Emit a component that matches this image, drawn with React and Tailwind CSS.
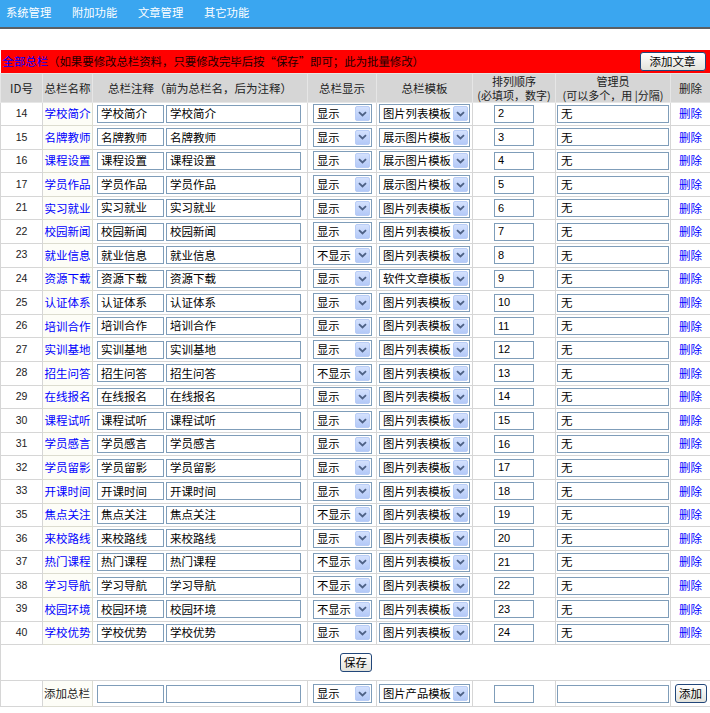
const cn = '"Noto Sans CJK SC", "Noto Sans", sans-serif';

const rows = [
  [14, "学校简介", "显示", "图片列表模板", 2],
  [15, "名牌教师", "显示", "展示图片模板", 3],
  [16, "课程设置", "显示", "展示图片模板", 4],
  [17, "学员作品", "显示", "展示图片模板", 5],
  [21, "实习就业", "显示", "图片列表模板", 6],
  [22, "校园新闻", "显示", "图片列表模板", 7],
  [23, "就业信息", "不显示", "图片列表模板", 8],
  [24, "资源下载", "显示", "软件文章模板", 9],
  [25, "认证体系", "显示", "图片列表模板", 10],
  [26, "培训合作", "显示", "图片列表模板", 11],
  [27, "实训基地", "显示", "图片列表模板", 12],
  [28, "招生问答", "不显示", "图片列表模板", 13],
  [29, "在线报名", "显示", "图片列表模板", 14],
  [30, "课程试听", "显示", "图片列表模板", 15],
  [31, "学员感言", "显示", "图片列表模板", 16],
  [32, "学员留影", "显示", "图片列表模板", 17],
  [33, "开课时间", "显示", "图片列表模板", 18],
  [35, "焦点关注", "不显示", "图片列表模板", 19],
  [36, "来校路线", "显示", "图片列表模板", 20],
  [37, "热门课程", "不显示", "图片列表模板", 21],
  [38, "学习导航", "不显示", "图片列表模板", 22],
  [39, "校园环境", "不显示", "图片列表模板", 23],
  [40, "学校优势", "显示", "图片列表模板", 24],
];

const Field = ({ className = "", children }) => (
  <div
    className={`h-[18px] border border-[#7f9db9] bg-white flex items-center pl-[3px] text-[11.5px] leading-none text-black overflow-hidden whitespace-nowrap ${className}`}
  >
    {children}
  </div>
);

const Drop = ({ className = "", children }) => (
  <div
    className={`h-[19px] border border-[#7f9db9] bg-white flex items-center justify-between pl-[3px] pr-[1px] text-[11.3px] leading-none text-black ${className}`}
  >
    <span className="whitespace-nowrap">{children}</span>
    <span className="shrink-0 w-[15px] h-[15px] rounded-[2px] border border-[#b9cdf6] bg-gradient-to-b from-[#d4e1fd] to-[#b3c9f7] flex items-center justify-center">
      <svg width="9" height="6" viewBox="0 0 9 6">
        <path d="M1 1.2 L4.5 4.5 L8 1.2" fill="none" stroke="#4d6185" strokeWidth="1.8" />
      </svg>
    </span>
  </div>
);

const Btn = ({ className = "", children }) => (
  <button
    className={`h-[19px] border border-[#22477a] rounded-[3px] bg-gradient-to-b from-white to-[#e3e3dc] text-[11.5px] leading-none text-black whitespace-nowrap inline-flex items-center justify-center ${className}`}
    style={{ fontFamily: cn }}
  >
    {children}
  </button>
);

export default function App() {
  return (
    <div className="w-[710px] min-h-[713px] bg-white" style={{ fontFamily: cn }}>
      <div className="h-[29px] bg-[#3aa6f0] border-b-2 border-[#5b5f63] flex items-start pt-[5px] pl-[6px]">
        {["系统管理", "附加功能", "文章管理", "其它功能"].map((t) => (
          <span key={t} className="w-[66px] text-[11.3px] text-white leading-[14px]">
            {t}
          </span>
        ))}
      </div>

      <table className="mt-[21px] w-[710px] table-fixed border-collapse text-[11.5px] text-[#222]">
        <colgroup>
          <col className="w-[42px]" />
          <col className="w-[50px]" />
          <col className="w-[215px]" />
          <col className="w-[69px]" />
          <col className="w-[96px]" />
          <col className="w-[83px]" />
          <col className="w-[115px]" />
          <col className="w-[40px]" />
        </colgroup>
        <tbody>
          <tr className="h-[23px] bg-[#ff0000]">
            <td colSpan={8} className="px-[2px]">
              <div className="flex items-center justify-between">
                <span className="whitespace-nowrap text-[11.4px] text-[#1a0000]">
                  <span className="text-[#0000ff]">全部总栏</span>（如果要修改总栏资料，只要修改完毕后按“保存”即可；此为批量修改）
                </span>
                <Btn className="w-[66px] mr-[3px]">添加文章</Btn>
              </div>
            </td>
          </tr>
          <tr className="h-[28px] bg-[#d6d6d6] text-center leading-[14px]">
            <td className="border border-[#e6e6e6]">ID号</td>
            <td className="border border-[#e6e6e6]">总栏名称</td>
            <td className="border border-[#e6e6e6]">总栏注释（前为总栏名，后为注释）</td>
            <td className="border border-[#e6e6e6]">总栏显示</td>
            <td className="border border-[#e6e6e6]">总栏模板</td>
            <td className="border border-[#e6e6e6] whitespace-nowrap text-[11px] leading-[14px]">
              <div className="h-[14px]">排列顺序</div>
              <div className="h-[14px]">(必填项，数字)</div>
            </td>
            <td className="border border-[#e6e6e6] whitespace-nowrap text-[11px] leading-[14px]">
              <div className="h-[14px]">管理员</div>
              <div className="h-[14px]">(可以多个，用 |分隔)</div>
            </td>
            <td className="border border-[#e6e6e6]">删除</td>
          </tr>
          {rows.map(([id, name, show, tpl, order]) => (
            <tr key={id} className="h-[23.6px]">
              <td
                className="border border-[#d6d6d6] text-center text-[10.5px] text-[#222]"
                style={{ fontFamily: '"Liberation Sans", sans-serif' }}
              >
                {id}
              </td>
              <td className="border border-[#dcdcd0] bg-[#fdfdf7] text-[#0000ff] text-center whitespace-nowrap">
                {name}
              </td>
              <td className="border border-[#d6d6d6] pl-[4px]">
                <div className="flex gap-[2px]">
                  <Field className="w-[67px]">{name}</Field>
                  <Field className="w-[135px]">{name}</Field>
                </div>
              </td>
              <td className="border border-[#d6d6d6] pl-[5px]">
                <Drop className="w-[59px]">{show}</Drop>
              </td>
              <td className="border border-[#d6d6d6] pl-[2px]">
                <Drop className="w-[91px]">{tpl}</Drop>
              </td>
              <td className="border border-[#d6d6d6]">
                <Field className="w-[40px] mx-auto text-[11px]">
                  <span style={{ fontFamily: '"Liberation Sans", sans-serif' }}>{order}</span>
                </Field>
              </td>
              <td className="border border-[#d6d6d6] pl-[1px]">
                <Field className="w-[112px]">无</Field>
              </td>
              <td className="border border-[#d6d6d6] text-center text-[#0000ff]">删除</td>
            </tr>
          ))}
          <tr className="h-[36px]">
            <td colSpan={8} className="border border-[#d6d6d6] text-center">
              <Btn className="w-[32px]">保存</Btn>
            </td>
          </tr>
          <tr className="h-[26px]">
            <td className="border border-[#d6d6d6]"></td>
            <td className="border border-[#dcdcd0] bg-[#fdfdf7] text-right pr-[2px] whitespace-nowrap">添加总栏</td>
            <td className="border border-[#d6d6d6] pl-[4px]">
              <div className="flex gap-[2px]">
                <Field className="w-[67px]" />
                <Field className="w-[135px]" />
              </div>
            </td>
            <td className="border border-[#d6d6d6] pl-[5px]">
              <Drop className="w-[59px]">显示</Drop>
            </td>
            <td className="border border-[#d6d6d6] pl-[2px]">
              <Drop className="w-[91px]">图片产品模板</Drop>
            </td>
            <td className="border border-[#d6d6d6]">
              <Field className="w-[40px] mx-auto" />
            </td>
            <td className="border border-[#d6d6d6] pl-[1px]">
              <Field className="w-[112px]" />
            </td>
            <td className="border border-[#d6d6d6] text-center">
              <Btn className="w-[32px]">添加</Btn>
            </td>
          </tr>
        </tbody>
      </table>
    </div>
  );
}
